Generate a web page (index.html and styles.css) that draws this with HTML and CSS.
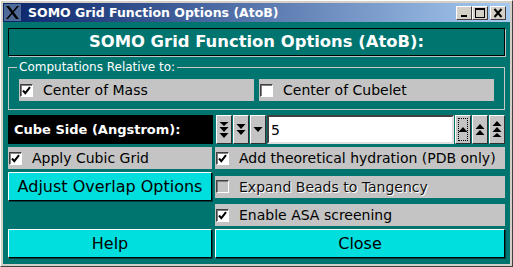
FILE: index.html
```html
<!DOCTYPE html>
<html lang="en">
<head>
    <meta charset="UTF-8">
    <title>SOMO Grid Function Options (AtoB)</title>
    <link rel="stylesheet" href="styles.css">
</head>
<body>
    <div class="window">
        <div class="titlebar">
            <span class="app-icon">
                <svg width="17" height="17" viewBox="0 0 17 17">
                    <rect width="17" height="17" fill="#4f6a96"/>
                    <polygon points="2,2 5,2 15,15 12,15" fill="#000"/>
                    <polygon points="13,2 15,2 4,15 2,15" fill="#000"/>
                </svg>
            </span>
            <span class="title-text">SOMO Grid Function Options (AtoB)</span>
            <span class="wm-buttons">
                <span class="wm-btn">
                    <svg width="14" height="12" viewBox="0 0 14 12"><rect x="4" y="8" width="6" height="2" fill="#000"/></svg>
                </span>
                <span class="wm-btn">
                    <svg width="14" height="12" viewBox="0 0 14 12"><rect x="2.5" y="1.5" width="9" height="9" fill="none" stroke="#000"/><rect x="2" y="1" width="10" height="2" fill="#000"/></svg>
                </span>
                <span class="wm-btn wm-close">
                    <svg width="14" height="12" viewBox="0 0 14 12"><path d="M3.5 2 L10.5 10 M10.5 2 L3.5 10" stroke="#000" stroke-width="2"/></svg>
                </span>
            </span>
        </div>

        <div class="client">
            <div class="heading">SOMO Grid Function Options (AtoB):</div>

            <fieldset class="group">
                <legend>Computations Relative to:</legend>
                <div class="group-row">
                    <div class="check-row">
                        <span class="check on"><svg width="9" height="9" viewBox="0 0 9 9"><path d="M1 4.5 L3.3 7.2 L8 1.2" fill="none" stroke="#000" stroke-width="2"/></svg></span>
                        Center of Mass
                    </div>
                    <div class="check-row">
                        <span class="check"></span>
                        Center of Cubelet
                    </div>
                </div>
            </fieldset>

            <div class="cube-row">
                <div class="cube-label">Cube Side (Angstrom):</div>
                <span class="spin">
                    <svg width="10" height="17" viewBox="0 0 10 17"><path d="M0.5 1h9l-4.5 4z M0.5 6h9l-4.5 5z M0.5 12h9l-4.5 5z" fill="#000"/></svg>
                </span>
                <span class="spin">
                    <svg width="10" height="11" viewBox="0 0 10 11"><path d="M0.5 0h9l-4.5 5z M0.5 6h9l-4.5 5z" fill="#000"/></svg>
                </span>
                <span class="spin">
                    <svg width="10" height="5" viewBox="0 0 10 5"><path d="M0.5 0h9l-4.5 5z" fill="#000"/></svg>
                </span>
                <div class="cube-input">5</div>
                <span class="spin focused">
                    <svg width="10" height="5" viewBox="0 0 10 5"><path d="M0.5 5h9l-4.5-5z" fill="#000"/></svg>
                </span>
                <span class="spin">
                    <svg width="10" height="11" viewBox="0 0 10 11"><path d="M0.5 5h9l-4.5-5z M0.5 11h9l-4.5-5z" fill="#000"/></svg>
                </span>
                <span class="spin">
                    <svg width="10" height="17" viewBox="0 0 10 17"><path d="M0.5 5h9l-4.5-5z M0.5 11h9l-4.5-5z M0.5 16h9l-4.5-4z" fill="#000"/></svg>
                </span>
            </div>

            <div class="options">
                <div class="check-row apply">
                    <span class="check on"><svg width="9" height="9" viewBox="0 0 9 9"><path d="M1 4.5 L3.3 7.2 L8 1.2" fill="none" stroke="#000" stroke-width="2"/></svg></span>
                    Apply Cubic Grid
                </div>
                <div class="check-row hydration">
                    <span class="check on"><svg width="9" height="9" viewBox="0 0 9 9"><path d="M1 4.5 L3.3 7.2 L8 1.2" fill="none" stroke="#000" stroke-width="2"/></svg></span>
                    Add theoretical hydration (PDB only)
                </div>
                <div class="button overlap">Adjust Overlap Options</div>
                <div class="check-row expand disabled">
                    <span class="check"></span>
                    Expand Beads to Tangency
                </div>
                <div class="check-row asa">
                    <span class="check on"><svg width="9" height="9" viewBox="0 0 9 9"><path d="M1 4.5 L3.3 7.2 L8 1.2" fill="none" stroke="#000" stroke-width="2"/></svg></span>
                    Enable ASA screening
                </div>
                <div class="button help">Help</div>
                <div class="button close">Close</div>
            </div>
        </div>
    </div>
</body>
</html>
```

FILE: styles.css
```css
* {
    box-sizing: border-box;
}

body {
    margin: 0;
    font-family: "DejaVu Sans", sans-serif;
}

.window {
    width: 513px;
    height: 267px;
    background: #d4d0c8;
    border: 1px solid;
    border-color: #ffffff #404040 #404040 #ffffff;
    padding: 2px;
    display: flex;
    flex-direction: column;
}

.titlebar {
    height: 19px;
    display: flex;
    align-items: center;
    background: linear-gradient(to right, #0a246a, #a6caf0);
    color: #fff;
    padding: 0 4px 0 1px;
}

.app-icon {
    display: flex;
    margin-right: 7px;
}

.title-text {
    font-weight: bold;
    font-size: 12.5px;
    flex: 1;
    white-space: nowrap;
}

.wm-buttons {
    display: flex;
}

.wm-btn {
    width: 16px;
    height: 14px;
    background: #d4d0c8;
    border: 1px solid;
    border-color: #ffffff #404040 #404040 #ffffff;
    display: flex;
    align-items: center;
    justify-content: center;
}

.wm-close {
    margin-left: 2px;
}

.client {
    flex: 1;
    background: #007570;
    padding: 6px 5px 0;
}

.heading {
    height: 28px;
    border: 1px solid #000;
    box-shadow: 1px 1px 0 #b8c8c8;
    color: #fff;
    font-weight: bold;
    font-size: 16.4px;
    line-height: 26px;
    text-align: center;
}

.group {
    margin: 4px 0 0;
    padding: 5px 10px 8px;
    border: 1px solid #c8c8c8;
}

.group legend {
    color: #fff;
    font-size: 12px;
    line-height: 14px;
    padding: 0 2px;
    margin-left: -2px;
}

.group-row {
    display: grid;
    grid-template-columns: 1fr 1fr;
    gap: 5px;
}

.check-row {
    height: 22px;
    background: #c4c4c4;
    display: flex;
    align-items: center;
    gap: 10px;
    padding-left: 1px;
    font-size: 14px;
    color: #000;
    white-space: nowrap;
}

.check {
    width: 13px;
    height: 13px;
    background: #fff;
    border: 1px solid;
    border-color: #404040 #ffffff #ffffff #404040;
    box-shadow: inset 1px 1px 0 #808080;
    display: flex;
    align-items: center;
    justify-content: center;
    flex: none;
}

.disabled {
    color: #101010;
    text-shadow: 1px 1px 0 #fff;
}

.disabled .check {
    background: #c4c4c4;
}

.cube-row {
    height: 29px;
    margin-top: 5px;
    display: flex;
    gap: 1px;
}

.cube-label {
    width: 205px;
    margin-right: 2px;
    background: #000;
    color: #fff;
    font-weight: bold;
    font-size: 13px;
    padding-left: 6px;
    display: flex;
    align-items: center;
}

.spin {
    width: 16px;
    background: #c4c4c4;
    border: 1px solid;
    border-color: #ffffff #303030 #303030 #ffffff;
    display: flex;
    align-items: center;
    justify-content: center;
}

.spin.focused {
    outline: 1px dotted #000;
    outline-offset: -4px;
}

.cube-input {
    flex: 1;
    background: #fff;
    border: 2px solid;
    border-color: #404040 #e0e0e0 #e0e0e0 #404040;
    font-size: 14px;
    padding-left: 2px;
    display: flex;
    align-items: center;
}

.options {
    margin-top: 3px;
    display: grid;
    grid-template-columns: 204px 290px;
    grid-template-rows: 22px 29px 22px 29px;
    gap: 3px;
}

.apply { grid-column: 1; grid-row: 1; }
.hydration { grid-column: 2; grid-row: 1; }
.overlap { grid-column: 1; grid-row: 2; }
.expand { grid-column: 2; grid-row: 2; align-self: center; }
.asa { grid-column: 2; grid-row: 3; }
.help { grid-column: 1; grid-row: 4; }
.close { grid-column: 2; grid-row: 4; }

.button {
    background: #00dede;
    border: 1px solid;
    border-color: #ffffff #000000 #000000 #ffffff;
    box-shadow: 1px 1px 0 #004040;
    display: flex;
    align-items: center;
    justify-content: center;
    font-size: 16px;
    color: #000;
}
```
